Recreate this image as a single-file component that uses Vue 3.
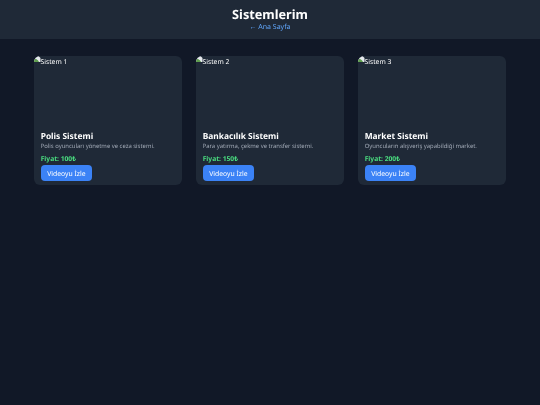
<script setup>
const systems = [
  { alt: 'Sistem 1', name: 'Polis Sistemi', desc: 'Polis oyuncuları yönetme ve ceza sistemi.', price: 'Fiyat: 100₺' },
  { alt: 'Sistem 2', name: 'Bankacılık Sistemi', desc: 'Para yatırma, çekme ve transfer sistemi.', price: 'Fiyat: 150₺' },
  { alt: 'Sistem 3', name: 'Market Sistemi', desc: 'Oyuncuların alışveriş yapabildiği market.', price: 'Fiyat: 200₺' },
]
</script>

<template>
  <div class="page">
    <header class="top">
      <h1>Sistemlerim</h1>
      <a class="back">← Ana Sayfa</a>
    </header>
    <main class="grid">
      <article v-for="s in systems" :key="s.alt" class="card">
        <div class="thumb">
          <svg class="broken" width="6.5" height="6.5" viewBox="0 0 16 16">
            <path d="M0 0h11l5 5v11H0z" fill="#e6e9ee"/>
            <path d="M0 16v-5c2-3 4-4 6-3 3 1 5 4 7 8z" fill="#5f9e4e"/>
          </svg>
          <span>{{ s.alt }}</span>
        </div>
        <div class="body">
          <h2>{{ s.name }}</h2>
          <p class="desc">{{ s.desc }}</p>
          <p class="price">{{ s.price }}</p>
          <button class="btn">Videoyu İzle</button>
        </div>
      </article>
    </main>
  </div>
</template>

<style>
html, body { margin: 0; background: #111827; }
</style>

<style scoped>
.page { min-height: 405px; background: #111827; color: #fff; font-family: "Noto Sans", sans-serif; text-rendering: geometricPrecision; filter: blur(0.3px); }
.top { background: #1f2937; height: 39px; text-align: center; box-sizing: border-box; padding-top: 5px; }
h1 { margin: 0; font-size: 12.7px; font-weight: 700; }
.back { display: block; font-size: 7px; color: #60a5fa; }
.grid { display: flex; gap: 14px; padding: 16.7px 34px; }
.card { width: 148px; height: 129.6px; background: #1f2937; border-radius: 6px; overflow: hidden; display: flex; flex-direction: column; }
.thumb { height: 75px; flex: none; font-size: 6.75px; line-height: 11.5px; display: flex; align-items: flex-start; }
.broken { flex: none; }
.body { padding: 0 6.7px; }
h2 { margin: 0; font-size: 8.4px; font-weight: 700; }
.desc { margin: 0; font-size: 5.9px; color: #a3abb8; }
.price { margin: 4.4px 0 0; font-size: 6.7px; font-weight: 700; color: #4ade80; }
.btn { display: block; margin-top: 1.8px; border: 0; background: #3b82f6; color: #fff; border-radius: 4px; font: 400 6.8px "Noto Sans", sans-serif; text-rendering: geometricPrecision; height: 16.4px; width: 51.4px; padding: 0; }
</style>
